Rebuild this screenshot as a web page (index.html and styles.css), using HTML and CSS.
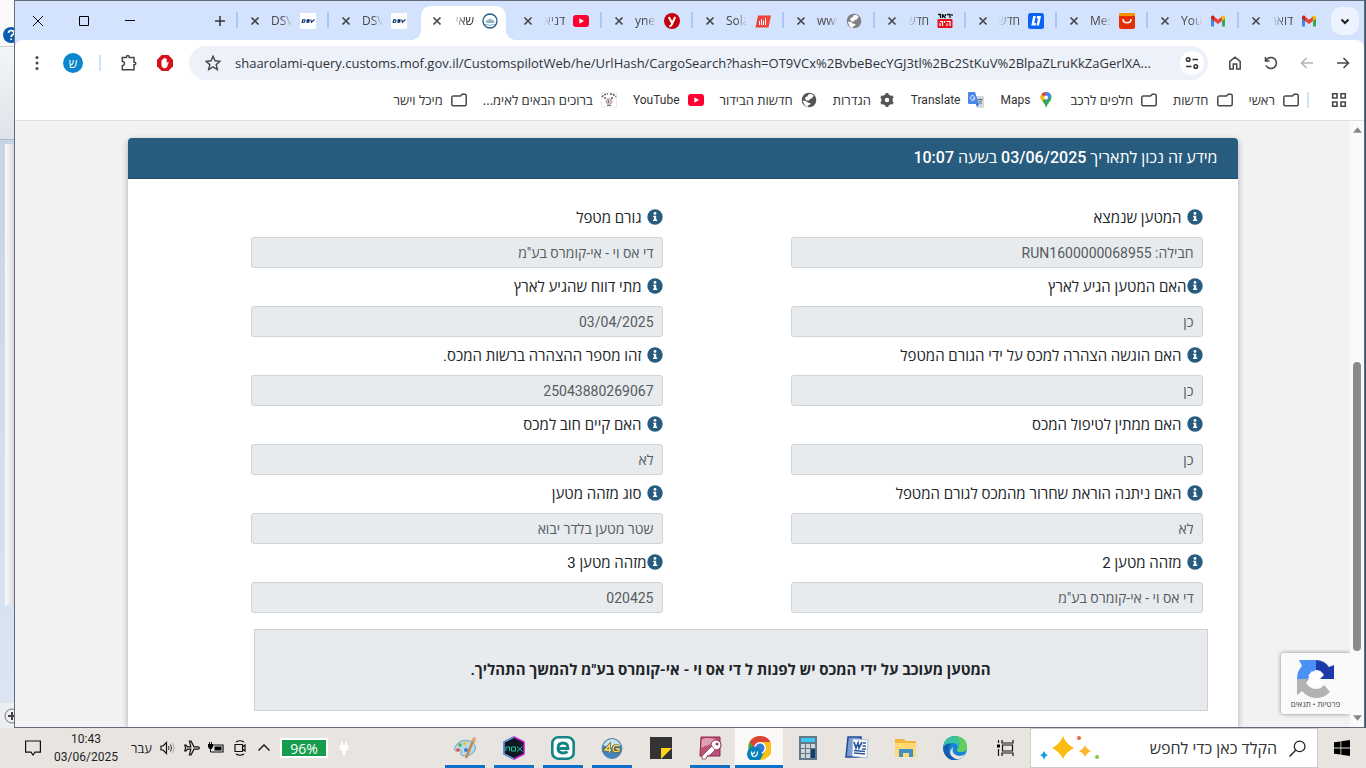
FILE: index.html
```html
<!DOCTYPE html>
<html lang="he" dir="rtl">
<head>
<meta charset="utf-8">
<title>שאילתת מטען</title>
<link rel="stylesheet" href="styles.css">
</head>
<body>
<svg class="defs" aria-hidden="true">
  <symbol id="x" viewBox="0 0 10 10"><path d="M1.500 1.500l7 7M8.500 1.500l-7 7" stroke="currentColor" stroke-width="1.700" fill="none"/></symbol>
  <symbol id="folder" viewBox="0 0 16 16"><path d="M.8 12.200V5.500a1.500 1.500 0 0 1 1.500-1.500H9.500l1.700-1.700h2.500a1.500 1.500 0 0 1 1.500 1.500v8.400a1.500 1.500 0 0 1-1.500 1.500H2.300a1.500 1.500 0 0 1-1.500-1.500z" fill="none" stroke="#474747" stroke-width="1.500"/></symbol>
  <symbol id="yt" viewBox="0 0 16 16"><rect y="2" width="16" height="12" rx="3" fill="#ff0033"/><path d="M6.300 5.300v5.400L11 8z" fill="#fff"/></symbol>
  <symbol id="globe" viewBox="0 0 16 16"><circle cx="8" cy="8" r="7.300" fill="currentColor"/><path d="M7.500 2.200l3-.2 2.500 2-1.500 1-.5 1.500-2 .3-1 1.700H5.500L4 7l.8-2.300 1.700-.2zM1.500 8.500l4 .8 1.500 1.500 2.500.2-.5 1.800-2 .7-.5 1.500-2.500-1.300z" fill="#fff"/></symbol>
  <symbol id="gmail" viewBox="0 0 16 16"><path d="M1 4v9.500h3V6.500z" fill="#4285f4"/><path d="M12 6.500v7h3V4z" fill="#34a853"/><path d="M4 3.500v4.400l4 3 4-3V3.500L8 6.700z" fill="#ea4335"/><path d="M1 4.200C1 2.400 3 1.900 4.200 3v4.900L1 5.600z" fill="#c5221f"/><path d="M15 4.200c0-1.800-2-2.300-3.200-1.200v4.900L15 5.600z" fill="#fbbc04"/></symbol>
  <symbol id="dsv" viewBox="0 0 16 16"><path d="M0 0h16v16H0z" fill="#fff"/><path d="M2.800 6.700h2q.8 1.200-.6 2.600H2.100zM9.600 6.700H7.300l-.3 1.200h2l-.3 1.400H6.200M10.800 6.500l.6 2.800L14.400 6.500" fill="none" stroke="#002664" stroke-width="1.100"/></symbol>
  <symbol id="info" viewBox="0 0 16 16"><circle cx="8" cy="8" r="7.700" fill="#285c7e"/><circle cx="8" cy="4.400" r="1.400" fill="#fff"/><path d="M6.200 6.800h3v3.800h1v1.500H6v-1.500h1V8.300h-.8z" fill="#fff"/></symbol>
</svg>

<main class="desktop">
  <section class="browser">
    <header class="tabstrip">
      <button class="tab-search" aria-label="חיפוש כרטיסיות"><svg viewBox="0 0 12 12"><path d="M2.500 4.500L6 8l3.500-3.500" fill="none" stroke="#1f1f1f" stroke-width="2"/></svg></button>
      <nav class="tabs">
        <div class="tab"><svg><use href="#gmail"/></svg><span>דואר</span><button aria-label="סגירה"><svg><use href="#x"/></svg></button></div>
        <div class="tab"><svg><use href="#gmail"/></svg><span dir="ltr">You</span><button aria-label="סגירה"><svg><use href="#x"/></svg></button></div>
        <div class="tab"><svg viewBox="0 0 16 16"><rect width="16" height="16" rx="2.500" fill="#e62e04"/><path d="M0 3V2Q0 0 2.500 0h11Q16 0 16 2v1z" fill="#f79400"/><path d="M4 6c0 5 8 5 8 0" fill="none" stroke="#fff" stroke-width="1.500"/></svg><span dir="ltr">Mes</span><button aria-label="סגירה"><svg><use href="#x"/></svg></button></div>
        <div class="tab"><svg viewBox="0 0 16 16"><rect width="16" height="16" rx="2.500" fill="#0b63f3"/><path d="M5.200 3h2.500L6.300 10h1.800l-.5 2.500H3.300zM9 3h4l-2 9.500H8.500L10 5.500H8.600z" fill="#fff"/></svg><span>חדש</span><button aria-label="סגירה"><svg><use href="#x"/></svg></button></div>
        <div class="tab"><svg viewBox="0 0 16 16"><path d="M1 1.500h2.500v3.500M5.500 1v4M5.500 1.500l3 3.500M8.500 1v2M10 1.500h3v3.500M15 1v2" stroke="#111" stroke-width="1.300" fill="none"/><rect x=".5" y="6" width="15" height="9" rx="1" fill="#e3131d"/><path d="M3 8.500h2.500V13M3 10v3M7.500 8v2M9.500 8.500H13V13M10 10.500v2.500" stroke="#fff" stroke-width="1.200" fill="none"/></svg><span>חדש</span><button aria-label="סגירה"><svg><use href="#x"/></svg></button></div>
        <div class="tab globe-tab"><svg><use href="#globe"/></svg><span dir="ltr">www</span><button aria-label="סגירה"><svg><use href="#x"/></svg></button></div>
        <div class="tab"><svg viewBox="0 0 16 16"><path d="M3 2.500h13l-2.500 12H.5z" fill="#f0443a"/><path d="M4.500 8v4M6.500 6v6M8.500 7.500V12M10.500 5v7" stroke="#fff" stroke-width="1"/></svg><span dir="ltr">Sola</span><button aria-label="סגירה"><svg><use href="#x"/></svg></button></div>
        <div class="tab"><svg viewBox="0 0 16 16"><circle cx="8" cy="8" r="8" fill="#c4000b"/><path d="M4.800 4l3.400 6.300M11.200 4L7.500 12q-.5 1.300-2.200 1" fill="none" stroke="#fff" stroke-width="2"/></svg><span dir="ltr">ynet</span><button aria-label="סגירה"><svg><use href="#x"/></svg></button></div>
        <div class="tab before-active"><svg><use href="#yt"/></svg><span>דניא</span><button aria-label="סגירה"><svg><use href="#x"/></svg></button></div>
        <div class="tab active"><svg viewBox="0 0 16 16"><circle cx="8" cy="8" r="7" fill="#fff" stroke="#235c80" stroke-width="1.300"/><path d="M3.500 10q0-3 1.500-3t3-2q1 2 3 2t1.500 3z" fill="#a8c4d8"/><path d="M3 11.500q5 1.500 10 0M6 7.500v2.500M8 6.500v3.500M10 7.500V10" fill="none" stroke="#6595b3" stroke-width=".8"/></svg><span>שאי</span><button aria-label="סגירה"><svg><use href="#x"/></svg></button></div>
        <div class="tab"><svg><use href="#dsv"/></svg><span dir="ltr">DSV</span><button aria-label="סגירה"><svg><use href="#x"/></svg></button></div>
        <div class="tab"><svg><use href="#dsv"/></svg><span dir="ltr">DSV</span><button aria-label="סגירה"><svg><use href="#x"/></svg></button></div>
      </nav>
      <button class="new-tab" aria-label="כרטיסייה חדשה"><svg viewBox="0 0 12 12"><path d="M6 1v10M1 6h10" stroke="#333" stroke-width="1.500"/></svg></button>
      <div class="window-controls">
        <button aria-label="מזעור"><svg viewBox="0 0 12 12"><path d="M1 5.500h10" stroke="#000"/></svg></button>
        <button aria-label="הגדלה"><svg viewBox="0 0 12 12"><path d="M1.500 1.500h9v9h-9z" fill="none" stroke="#000"/></svg></button>
        <button aria-label="סגירת החלון"><svg viewBox="0 0 12 12"><path d="M1 1l10 10M11 1L1 11" stroke="#000"/></svg></button>
      </div>
    </header>

    <div class="toolbar">
      <button aria-label="הקודם"><svg viewBox="0 0 16 16"><path d="M2 8h11M8.500 3l5 5-5 5" fill="none" stroke="#474747" stroke-width="1.600"/></svg></button>
      <button aria-label="הבא"><svg viewBox="0 0 16 16"><path d="M14 8H3M7.500 3l-5 5 5 5" fill="none" stroke="#b5b5b5" stroke-width="1.600"/></svg></button>
      <button aria-label="טעינה מחדש"><svg viewBox="0 0 16 16"><path d="M2.500 2v4h4M3 5.500A5.500 5.500 0 1 1 3 10.500" fill="none" stroke="#474747" stroke-width="1.600"/></svg></button>
      <button aria-label="דף הבית"><svg viewBox="0 0 16 16"><path d="M2.800 14V6.300L8 2.200l5.200 4.100V14H9.700V9H6.300v5z" fill="none" stroke="#474747" stroke-width="1.500"/></svg></button>
      <form class="omnibox" dir="ltr">
        <button type="button" aria-label="סימנייה"><svg viewBox="0 0 16 16"><path d="M8 1.200l2 4.600 5 .5-3.800 3.300 1.100 4.900L8 11.900l-4.300 2.600 1.100-4.900L1 6.300l5-.5z" fill="none" stroke="#474747" stroke-width="1.400"/></svg></button>
        <input aria-label="שורת הכתובת" type="text" value="shaarolami-query.customs.mof.gov.il/CustomspilotWeb/he/UrlHash/CargoSearch?hash=OT9VCx%2BvbeBecYGJ3tl%2Bc2StKuV%2BlpaZLruKkZaGerlXA...">
        <button type="button" class="site-info" aria-label="פרטי האתר"><svg viewBox="0 0 16 16"><path d="M8.500 4.500H14M2 11.500h5.500" stroke="#333" stroke-width="1.600"/><circle cx="4.200" cy="4.500" r="1.800" fill="none" stroke="#333" stroke-width="1.500"/><circle cx="11.800" cy="11.500" r="1.800" fill="none" stroke="#333" stroke-width="1.500"/></svg></button>
      </form>
      <button aria-label="חוסם פרסומות"><svg viewBox="0 0 16 16"><path d="M4.700 0h6.600L16 4.700v6.600L11.300 16H4.700L0 11.300V4.700z" fill="#d4121b"/><path d="M4.500 8.500V5.200q.6-.8 1.200 0V4q.7-.9 1.300 0V3.200q.7-.9 1.400 0V4q.7-.9 1.300 0v4l1.200-.9q.9 0 .7.700L10 12q-1 1.500-3 1.300-2.500-.4-2.500-3z" fill="#fff"/></svg></button>
      <button aria-label="תוספים"><svg viewBox="0 0 16 16"><path d="M1.300 2.500h4.200V1.800a1.300 1.300 0 0 1 2.600 0v.7H13v4.700h.5a1.300 1.300 0 0 1 0 2.600H13v4.900H1.300v-4q2.200-.5 2.200-2.200T1.300 6.300z" fill="none" stroke="#474747" stroke-width="1.500"/></svg></button>
      <span class="divider"></span>
      <button class="profile" aria-label="פרופיל">ש</button>
      <button aria-label="תפריט"><svg viewBox="0 0 16 16" fill="#474747"><circle cx="8" cy="2.500" r="1.500"/><circle cx="8" cy="8" r="1.500"/><circle cx="8" cy="13.500" r="1.500"/></svg></button>
    </div>

    <nav class="bookmarks">
      <button aria-label="אפליקציות"><svg viewBox="0 0 16 16"><path d="M1.700 1.700h4.300v4.300H1.700zM10 1.700h4.300v4.300H10zM1.700 10h4.300v4.300H1.700zM10 10h4.300v4.300H10z" fill="none" stroke="#474747" stroke-width="1.600"/></svg></button>
      <span class="divider"></span>
      <a href="#"><svg><use href="#folder"/></svg>ראשי</a>
      <a href="#"><svg><use href="#folder"/></svg>חדשות</a>
      <a href="#"><svg><use href="#folder"/></svg>חלפים לרכב</a>
      <a href="#" class="latin"><svg viewBox="0 0 16 16"><path d="M8 16q-.7-3.500-3-6Q2.500 7.200 2.500 5.500A5.500 5.500 0 0 1 13.500 5.500q0 2.200-2.500 5Q8.800 13 8 16z" fill="#34a853"/><path d="M8 0a5.500 5.500 0 0 1 5.200 3.700L8.500 9 5.500 3z" fill="#4285f4"/><path d="M3.700 2L8 5.500 4.500 9.300Q2.500 7 2.500 5.500 2.500 3.500 3.700 2z" fill="#fbbc04"/><path d="M3.700 2Q5.500 0 8 0l-1 4-1 1z" fill="#ea4335"/><circle cx="8" cy="5.500" r="2" fill="#fff"/></svg>Maps</a>
      <a href="#" class="latin"><svg viewBox="0 0 16 16"><path d="M6 4h9q1 0 1 1v10q0 1-1 1H9z" fill="#d5d8dc"/><path d="M1 0h6l4 12H1q-1 0-1-1V1q0-1 1-1z" fill="#4a87ec"/><path d="M8 12h3l-2 3z" fill="#3367d6"/><path d="M6.500 4.500A2.300 2.300 0 1 0 7 6H5" fill="none" stroke="#fff"/><path d="M9.500 7.500h5M12 6.500v1M10.500 12q3-1.800 3-4M11 8.500q.5 2 3 3.500" stroke="#607d8b" fill="none"/></svg>Translate</a>
      <a href="#"><svg viewBox="0 0 16 16"><circle cx="8" cy="8" r="4" fill="none" stroke="#555" stroke-width="3.600"/><path d="M8 1v3M8 12v3M2 4.500l2.500 1.500M11.500 10l2.500 1.500M2 11.500L4.500 10M11.500 6L14 4.500" stroke="#555" stroke-width="3"/></svg>הגדרות</a>
      <a href="#"><svg><use href="#globe"/></svg>חדשות הבידור</a>
      <a href="#" class="latin"><svg><use href="#yt"/></svg>YouTube</a>
      <a href="#"><svg viewBox="0 0 16 16"><path d="M.5 1v14h15V1z" fill="#fff" stroke="#ddd" stroke-width=".6"/><path d="M1 5q2-3 6-3M9 2q4 0 6 3M3 6h3M10 6h3" stroke="#536075" stroke-width="1.500" stroke-dasharray="2 1" fill="none"/><circle cx="8" cy="9.500" r="3" fill="#d8bfc4" stroke="#777" stroke-dasharray="1 1"/><path d="M6 13.500h4M7.500 8v3" stroke="#777"/></svg>ברוכים הבאים לאימ...</a>
      <a href="#"><svg><use href="#folder"/></svg>מיכל וישר</a>
    </nav>

    <div class="viewport">
      <div class="scrollbar">
        <svg viewBox="0 0 10 6"><path d="M0 6l5-6 5 6z" fill="#888"/></svg>
        <span class="track"><span class="thumb"></span></span>
        <svg viewBox="0 0 10 6"><path d="M0 0l5 6 5-6z" fill="#888"/></svg>
      </div>
      <div class="page">
        <article class="card">
          <h1>מידע זה נכון לתאריך 03/06/2025 בשעה 10:07</h1>
          <form class="fields">
            <div class="field"><label for="f1"><svg><use href="#info"/></svg>המטען שנמצא</label><input id="f1" readonly value="חבילה: RUN1600000068955"></div>
            <div class="field"><label for="f2"><svg><use href="#info"/></svg>גורם מטפל</label><input id="f2" readonly value="די אס וי - אי-קומרס בע&quot;מ"></div>
            <div class="field"><label class="tight" for="f3"><svg><use href="#info"/></svg>האם המטען הגיע לארץ</label><input id="f3" readonly value="כן"></div>
            <div class="field"><label for="f4"><svg><use href="#info"/></svg>מתי דווח שהגיע לארץ</label><input id="f4" readonly value="03/04/2025"></div>
            <div class="field"><label for="f5"><svg><use href="#info"/></svg>האם הוגשה הצהרה למכס על ידי הגורם המטפל</label><input id="f5" readonly value="כן"></div>
            <div class="field"><label for="f6"><svg><use href="#info"/></svg>זהו מספר ההצהרה ברשות המכס.</label><input id="f6" readonly value="25043880269067"></div>
            <div class="field"><label for="f7"><svg><use href="#info"/></svg>האם ממתין לטיפול המכס</label><input id="f7" readonly value="כן"></div>
            <div class="field"><label for="f8"><svg><use href="#info"/></svg>האם קיים חוב למכס</label><input id="f8" readonly value="לא"></div>
            <div class="field"><label for="f9"><svg><use href="#info"/></svg>האם ניתנה הוראת שחרור מהמכס לגורם המטפל</label><input id="f9" readonly value="לא"></div>
            <div class="field"><label for="f10"><svg><use href="#info"/></svg>סוג מזהה מטען</label><input id="f10" readonly value="שטר מטען בלדר יבוא"></div>
            <div class="field"><label for="f11"><svg><use href="#info"/></svg>מזהה מטען 2</label><input id="f11" readonly value="די אס וי - אי-קומרס בע&quot;מ"></div>
            <div class="field"><label class="tight" for="f12"><svg><use href="#info"/></svg>מזהה מטען 3</label><input id="f12" readonly value="020425"></div>
          </form>
          <p class="notice">המטען מעוכב על ידי המכס יש לפנות ל די אס וי - אי-קומרס בע"מ להמשך התהליך.</p>
        </article>
        <aside class="recaptcha">
          <svg viewBox="0 0 40 40"><path d="M38 6v14H24l4-4q-3-5-8-5V1q8 0 13 7z" fill="#1c3aa9"/><path d="M5 1h15v10q-5 1-8 9H1q0-8 5-13L3 1z" fill="#4a90f5"/><path d="M1 20h12l-3 4q4 6 10 6 5 0 8-4l6 7q-6 6-14 6T6 32l-5 4z" fill="#b2b2b2"/><path d="M20 20l-8-3 4-5 4 5 4-5 3 4-5 4 4 5-5 3-2-4-5 3-2-4z" fill="#fff"/></svg>
          <p><a href="#">פרטיות</a> • <a href="#">תנאים</a></p>
        </aside>
      </div>
    </div>
  </section>

  <aside class="behind">
    <div class="behind-title"><svg viewBox="0 0 16 16"><circle cx="8" cy="8" r="8" fill="#0a5cad"/><path d="M5.500 6q0-2.500 2.700-2.500T11 6q0 1-1.500 1.800T8.200 10M8.200 11.500v1.500" fill="none" stroke="#fff" stroke-width="1.700"/></svg></div>
    <div class="behind-ribbon"></div>
    <div class="behind-sheet"></div>
    <div class="behind-foot"><svg viewBox="0 0 16 16"><circle cx="8" cy="8" r="7" fill="none" stroke="#777"/><path d="M8 4v8M4 8h8" stroke="#444" stroke-width="2"/></svg></div>
  </aside>
</main>

<footer class="taskbar">
  <button class="start" aria-label="התחל"><svg viewBox="0 0 16 16"><path d="M0 2.300L6.500 1.400V7.600H0zM7.300 1.300L16 0v7.600H7.300zM0 8.400h6.500v6.200L0 13.700zM7.300 8.400H16V16l-8.700-1.300z"/></svg></button>
  <div class="search">
    <svg class="lens" viewBox="0 0 16 16"><circle cx="10" cy="6" r="5" fill="none" stroke="#222" stroke-width="1.200"/><path d="M6.300 9.700L.5 15.500" stroke="#222" stroke-width="1.300"/></svg>
    <input type="text" aria-label="חיפוש" placeholder="הקלד כאן כדי לחפש">
    <svg class="sparkle" viewBox="0 0 62 26"><path d="M24 1q3 8 11 12-8 4-11 11-3-7-11-11 8-4 11-12z" fill="#fbbd12"/><path d="M46 10q1.500 4 6 6-4.500 2-6 6-1.500-4-6-6 4.500-2 6-6z" fill="#fbb829"/><path d="M5 16q1 3 4 4-3 1-4 5-1-4-4-5 3-1 4-4z" fill="#159de0"/><circle cx="40" cy="3" r="2" fill="#e5683d"/><circle cx="58" cy="22" r="2" fill="#8bc34a"/></svg>
  </div>
  <div class="apps">
    <button class="task-view" aria-label="תצוגת משימות"><svg viewBox="0 0 24 24"><path d="M8 4v3h11V4M8 20v-3h11v3M8.500 9h10v6h-10zM4.500 4v3M4.500 13v7" fill="none" stroke="#111" stroke-width="1.200"/><path d="M3 8.500h3v3H3z"/></svg></button>
    <button aria-label="Edge"><svg viewBox="0 0 24 24"><circle cx="12" cy="12" r="12" fill="#1683d5"/><path d="M0 11Q2 0 12 0t12 11q0 5-6 5-4 0-4-2l1-2q0-5-6-5-6 0-9 4z" fill="#37c2a0"/><path d="M13 0q11 2 11 11 0 5-6 5-4 0-4-2l1-2q5-4-2-12z" fill="#63cf59"/><path d="M0 12Q3 7 8 8q-3 3-2 8 2 6 9 8Q2 26 0 12z" fill="#165bad"/><path d="M10 11q-2 8 6 9 4 0 6-2-3 6-9 5Q3 18 10 11z" fill="#e8e5e1"/></svg></button>
    <button aria-label="סייר הקבצים"><svg viewBox="0 0 24 24"><path d="M1 3h9l2 2h10v16H1z" fill="#f2b63b"/><path d="M1 7h21v14H1z" fill="#ffda72"/><path d="M5 21v-8h14v8h-4v-4H9v4z" fill="#4090c5"/></svg></button>
    <button aria-label="Word"><svg viewBox="0 0 24 24"><path d="M3 1h13v20H1z" fill="#789bd3" stroke="#204b98" stroke-width="1.500"/><path d="M8 3l15 1-1 18-15-2z" fill="#fff" stroke="#aebfdd"/><path d="M9 6l2 6 2-5 1 5 3-6" stroke="#2b579a" stroke-width="1.700" fill="none"/><path d="M9 14.500l11 1M9 17l11 1M17.500 10h3.500M17 13h4M18 7h3" stroke="#2b579a" stroke-width="1.300" fill="none"/></svg></button>
    <button aria-label="מחשבון"><svg viewBox="0 0 24 24"><path d="M3 0h18v24H3z" fill="#627887"/><path d="M5 2h14v4H5z" fill="#42c7f4"/><path d="M5 8h4v4H5zM10 8h4v4h-4zM15 8h4v4h-4zM5 13h4v4H5zM10 13h4v4h-4zM5 18h4v4H5zM10 18h4v4h-4z" fill="#ced6da"/><path d="M15 13h4v9h-4z" fill="#143e70"/></svg></button>
    <button class="current" aria-label="Chrome"><svg viewBox="0 0 24 24"><circle cx="13" cy="12" r="12" fill="#fbc116"/><path d="M2.600 6A12 12 0 0 1 23.400 6H13l-5 9z" fill="#db4437"/><path d="M2.600 6q-3 8 2.400 14l8 4 5-9h-9z" fill="#35a853"/><circle cx="13" cy="12" r="6" fill="#fff"/><circle cx="13" cy="12" r="4.500" fill="#3679dd"/><circle cx="7.500" cy="18" r="7.500" fill="#087fbe"/><path d="M4.500 15.500q0 5 2.500 5 3.500 0 3.500-5M7.500 15.500q0 2-2.500 2.500" fill="none" stroke="#fff" stroke-width="1.200"/></svg></button>
    <button class="open" aria-label="Access"><svg viewBox="0 0 24 24"><path d="M3 1h19v19H2z" fill="#b85578" stroke="#8d2446"/><path d="M4 3q9-3 17 2v5q-8-4-18 2z" fill="#dfa0b5"/><circle cx="18" cy="9" r="5" fill="#fff" stroke="#8d2446"/><path d="M14 10L4 20v3h4l1-3 3-1 5-5z" fill="#fff" stroke="#8d2446" stroke-width=".7"/><circle cx="19" cy="8" r="1.500" fill="#a83860"/></svg></button>
    <button aria-label="פתקים"><svg viewBox="0 0 24 24"><path d="M1 1h22v22H1z" fill="#333"/><path d="M12 12h11L12 23z" fill="#ffd51f"/></svg></button>
    <button class="open" aria-label="4G"><svg viewBox="0 0 24 24"><circle cx="12" cy="12.500" r="10" fill="#3e83bc" stroke="#6388a4"/><path d="M3 9q9-12 18 0-9 5-18 0z" fill="#c5e4ef"/><path d="M9.500 16.500V9L5 14h6M19 10q-6-2-6 3 0 4 6 2v-2h-3" fill="none" stroke="#665820" stroke-width="2.600"/><path d="M9.500 16.500V9L5 14h6M19 10q-6-2-6 3 0 4 6 2v-2h-3" fill="none" stroke="#ffe16a" stroke-width="1.300"/></svg></button>
    <button class="open" aria-label="אבטחה"><svg viewBox="0 0 24 24"><rect x="1.300" y="1.300" width="21.400" height="21.400" rx="6" fill="#fff" stroke="#138588" stroke-width="2.600"/><path d="M7 12.500h10q0-5.500-5-5.500t-5 5 5 5q3 0 4.500-1.500" fill="none" stroke="#138588" stroke-width="2.800"/></svg></button>
    <button class="open" aria-label="Nox"><svg viewBox="0 0 24 24"><path d="M12 1l10 5v12l-10 5-10-5V6z" fill="#10191f" stroke="#c41bd0" stroke-width="1.600"/><path d="M12 1L2 6v12l10 5" fill="none" stroke="#22bfd2" stroke-width="1.200"/><path d="M4 15v-4h3.500v4M9.500 11h4v4h-4zM15 10.500l5.500 5M20.500 10.500l-5.500 5" fill="none" stroke="#18c9b1"/></svg></button>
    <button class="open" aria-label="צייר"><svg viewBox="0 0 24 24"><path d="M2 11Q7 2 17 5q7 3 5 9-3 6-10 6-5 0-4-4t-4-1q-4 0-2-4z" fill="#b7d9e8" stroke="#72a3bb"/><circle cx="5" cy="14" r="1.800" fill="#e44"/><circle cx="7" cy="9" r="1.800" fill="#45b65b"/><circle cx="12" cy="7.500" r="1.800" fill="#f2c035"/><circle cx="13" cy="14" r="2" fill="#457fd0"/><path d="M13 22L20 5" stroke="#c58745" stroke-width="2.300"/><path d="M18 4l3-3 2 1-1 5z" fill="#dba678"/></svg></button>
  </div>
  <div class="tray">
    <svg viewBox="0 0 16 16"><path d="M6 1.500v4M10 1.500v4" stroke="#fff" stroke-width="1.500"/><path d="M4 5h8v4l-2.500 2.500V15h-3v-3.500L4 9z" fill="#fff"/></svg>
    <span class="battery">96%</span>
    <svg viewBox="0 0 16 16"><path d="M2.500 10.500L8 5l5.500 5.500" fill="none" stroke="#111" stroke-width="1.300"/></svg>
    <svg viewBox="0 0 16 16"><path d="M4 2q4-2.500 8 0M4 14q4 2.500 8 0M3 4.500h7.500v7H3zM10.500 7L13 5v6l-2.500-2" fill="none" stroke="#111" stroke-width="1.200"/></svg>
    <svg viewBox="0 0 16 16"><path d="M5 5h10v7H5" fill="none" stroke="#111" stroke-width="1.200"/><path d="M6.500 6.500h7v4h-7zM0 4h5v3L3.500 9h-2L0 7z"/><path d="M1.500 2v2M3.500 2v2M2.500 8v4h3" fill="none" stroke="#111"/></svg>
    <svg viewBox="0 0 16 16"><path d="M15.300 8q0-1.200-1.500-1.200H10L7 1H5.500l1.300 5.800H3.500L2 5H.8l.8 3-.8 3H2l1.500-1.800h3.300L5.500 15H7l3-5.800h3.800q1.500 0 1.500-1.200z" fill="none" stroke="#111" stroke-width="1.200"/></svg>
    <svg viewBox="0 0 16 16"><path d="M1 6v4h2l3.500 3.500v-11L3 6z" fill="none" stroke="#111" stroke-width="1.200"/><path d="M8.500 6q1 2 0 4M10.500 4.500q2 3.500 0 7" fill="none" stroke="#333"/><path d="M12.700 3q2.800 5 0 10" fill="none" stroke="#aaa"/></svg>
    <span class="lang">עבר</span>
    <time class="clock">10:43<br>03/06/2025</time>
    <svg viewBox="0 0 16 16"><path d="M.6 1h14.800v11.200H10L8 15l-2-2.800H.6z" fill="none" stroke="#111" stroke-width="1.200"/></svg>
  </div>
</footer>
</body>
</html>
```

FILE: styles.css
```css
* { box-sizing: border-box; }
body {
  margin: 0;
  height: 100vh;
  display: flex;
  flex-direction: column;
  overflow: hidden;
  font-family: "Open Sans", "Noto Sans", "Liberation Sans", sans-serif;
  color: #1f1f1f;
}
button { border: 0; padding: 0; background: none; font: inherit; display: flex; align-items: center; justify-content: center; }
input { border: 0; background: none; font: inherit; min-width: 0; }
svg { width: 16px; height: 16px; flex: none; }
.defs { display: none; }

.desktop { flex: 1; min-height: 0; display: flex; padding-right: 1px; background: #38536e; }

/* browser window */
.browser { flex: 1; min-width: 0; display: flex; flex-direction: column; border: 1px solid #666b7b; background: #d3e3fd; }
.tabstrip { height: 39px; flex: none; display: flex; align-items: center; padding-right: 5px; }
.tab-search { width: 28px; height: 28px; border-radius: 10px; background: #ecf2fe; margin-left: 3px; }
.tab-search svg { width: 12px; height: 12px; }
.tabs { display: flex; height: 39px; }
.tab {
  width: 91px; height: 39px;
  display: flex; align-items: center;
  padding: 0 11px 0 12px; gap: 8px;
  position: relative;
  font-size: 12px; color: #474747;
  border-left: 2px solid transparent;
  border-image: linear-gradient(transparent 11px, #a8c7fa 11px, #a8c7fa 27px, transparent 27px) 0 0 0 2;
}
.tab.before-active, .tab.active { border-image: none; }
.tab span { width: 21px; white-space: nowrap; overflow: hidden; -webkit-mask-image: linear-gradient(to left, #000 40%, transparent); mask-image: linear-gradient(to left, #000 40%, transparent); }
.tab span[dir="ltr"] { -webkit-mask-image: linear-gradient(to right, #000 50%, transparent); mask-image: linear-gradient(to right, #000 50%, transparent); }
.tab button { margin-right: auto; color: #474747; }
.tab button svg { width: 10px; height: 10px; }
.globe-tab > svg { color: #808080; }
.tab.active { z-index: 1; color: #1f1f1f; }
.tab.active > * { z-index: 1; }
.tab.active::before { content: ""; position: absolute; left: 1px; right: 3px; top: 5px; bottom: 0; background: #fff; border-radius: 10px 10px 0 0; }
.tab.active::after {
  content: ""; position: absolute; left: -9px; right: -7px; bottom: 0; height: 10px;
  background:
    radial-gradient(circle at 0 0, transparent 10px, #fff 10px) left / 10px 10px no-repeat,
    radial-gradient(circle at 100% 0, transparent 10px, #fff 10px) right / 10px 10px no-repeat;
}
.new-tab { width: 28px; height: 28px; margin-right: 2px; }
.new-tab svg { width: 12px; height: 12px; }
.window-controls { display: flex; margin-right: auto; }
.window-controls button { width: 46px; height: 38px; }
.window-controls svg { width: 12px; height: 12px; }

.toolbar { height: 46px; flex: none; display: flex; align-items: center; gap: 4px; padding: 0 5px 0 6px; background: #fff; border-radius: 8px 8px 0 0; }
.toolbar > button { width: 32px; height: 32px; flex: none; }
.omnibox { flex: 1; min-width: 0; height: 34px; margin: 0 7px 0 4px; display: flex; align-items: center; border-radius: 17px; background: #edf1fa; padding: 0 4px 0 16px; gap: 14px; }
.omnibox input { flex: 1; padding: 0; font-size: 13px; color: #303236; text-overflow: ellipsis; outline: 0; }
.site-info { width: 24px; height: 24px; border-radius: 12px; background: #fff; }
.divider { width: 2px; height: 16px; background: #d3e3fd; }
.toolbar .divider { margin: 0 8px 0 6px; }
.toolbar .profile { width: 20px; height: 20px; border-radius: 10px; background: #0b86cc; color: #fff; font-size: 12px; margin: 0 6px; }

.bookmarks { height: 35px; flex: none; display: flex; align-items: center; gap: 16px; padding: 0 17px 7px; background: #fff; border-bottom: 1px solid #dcdfe3; font-size: 13px; white-space: nowrap; overflow: hidden; }
.bookmarks a { display: flex; align-items: center; gap: 8px; color: #333; text-decoration: none; }
.bookmarks a svg { color: #555; }
.bookmarks .latin { font-family: Roboto, sans-serif; font-size: 12px; }
.bookmarks .divider { margin: 0 6px 0 -8px; }

/* customs page */
.viewport { flex: 1; min-height: 0; display: flex; background: #f2f2f2; }
.page { flex: 1; min-width: 0; position: relative; overflow: hidden; padding-top: 17px; font-family: Roboto, "Open Sans", "Noto Sans", sans-serif; }
.card { max-width: 1110px; margin: 0 auto; min-height: 100%; background: #fff; border-radius: 4px 4px 0 0; box-shadow: 0 2px 6px rgba(0,0,0,.3); }
.card h1 { margin: 0; padding: 0 20px; height: 41px; line-height: 40px; font-size: 16px; font-weight: 500; color: #fff; background: #285c7e; border-bottom: 1px solid #244b64; border-radius: 4px 4px 0 0; }
.fields { display: grid; grid-template-columns: 1fr 1fr; column-gap: 128px; row-gap: 7px; padding: 27px 35px 0 123px; }
.field { display: flex; flex-direction: column; gap: 10px; }
.field label { height: 21px; display: flex; align-items: center; gap: 5px; font-size: 15px; color: #212529; white-space: nowrap; }
.field label.tight { gap: 0; }
.field input { width: 100%; height: 31px; padding: 0 8px; font-size: 14px; color: #555b61; background: #e8ebee; border: 1px solid #ced4da; border-radius: 3px; }
.notice { margin: 16px 30px 17px 126px; padding: 28px 16px; line-height: 24px; text-align: center; font-size: 15px; font-weight: 700; color: #212529; background: #e8ebee; border: 1px solid #ced0d6; }
.recaptcha { position: absolute; right: 0; bottom: 13px; width: 69px; height: 61px; background: #fafafa; border-radius: 3px 0 0 3px; box-shadow: 0 0 4px #888; display: flex; flex-direction: column; align-items: center; padding-top: 6px; }
.recaptcha svg { width: 40px; height: 40px; }
.recaptcha p { margin: 0; font-size: 8px; line-height: 12px; color: #333; white-space: nowrap; }
.recaptcha a { color: #444; text-decoration: none; }
.scrollbar { width: 14px; display: flex; flex-direction: column; align-items: center; background: #fafafa; padding: 6px 0; }
.scrollbar svg { width: 9px; height: 6px; }
.track { flex: 1; width: 8px; padding: 229px 0 64px; display: flex; }
.thumb { flex: 1; border-radius: 4px; background: #8b8b8b; }

/* spreadsheet peeking out at the left */
.behind { width: 14px; overflow: hidden; display: flex; flex-direction: column; direction: ltr; background: linear-gradient(#c2cfe4, #dce6f3); }
.behind-title { height: 47px; padding: 26px 0 0 3px; background: #fafafa; border-bottom: 1px solid #ccc; }
.behind-ribbon { height: 93px; background: linear-gradient(#f4f5f6, #dfe3e8); border-bottom: 1px solid #aab8cc; }
.behind-sheet { flex: 1; margin: 4px 0 98px 5px; background: linear-gradient(to right, #fafafa, #d8dadc); }
.behind-foot { height: 25px; padding: 4px 0 0 4px; background: #eceeef; }

/* taskbar */
.taskbar { height: 40px; flex: none; display: flex; align-items: stretch; background: #e8e5e1; }
.start { width: 48px; }
.search { width: 288px; display: flex; align-items: center; gap: 12px; padding: 0 11px 0 8px; background: #fff; border: 1px solid #ccc; }
.search .lens { width: 17px; height: 17px; }
.search input { flex: 1; padding: 0; font-size: 16px; outline: 0; }
.search input::placeholder { color: #333; opacity: 1; }
.search .sparkle { width: 62px; height: 26px; }
.apps { display: flex; gap: 1px; }
.apps button { width: 48px; position: relative; }
.apps button svg { width: 24px; height: 24px; }
.apps .task-view { margin-left: 2px; }
.apps .current { background: #faf9f8; }
.apps .open::after, .apps .current::after { content: ""; position: absolute; left: 4px; right: 4px; bottom: 0; height: 3px; background: #0f71c8; }
.apps .current::after { left: 0; right: 0; }
.tray { flex: 1; display: flex; align-items: center; justify-content: flex-end; gap: 8px; padding-left: 25px; font-size: 12px; white-space: nowrap; }
.battery { width: 48px; height: 20px; display: flex; align-items: center; justify-content: center; background: #169c4c; border: 2px solid #fff; color: #fff; font-size: 14px; }
.lang { font-size: 13px; }
.clock { width: 74px; direction: ltr; text-align: center; line-height: 18px; font-family: Roboto, sans-serif; }
```
